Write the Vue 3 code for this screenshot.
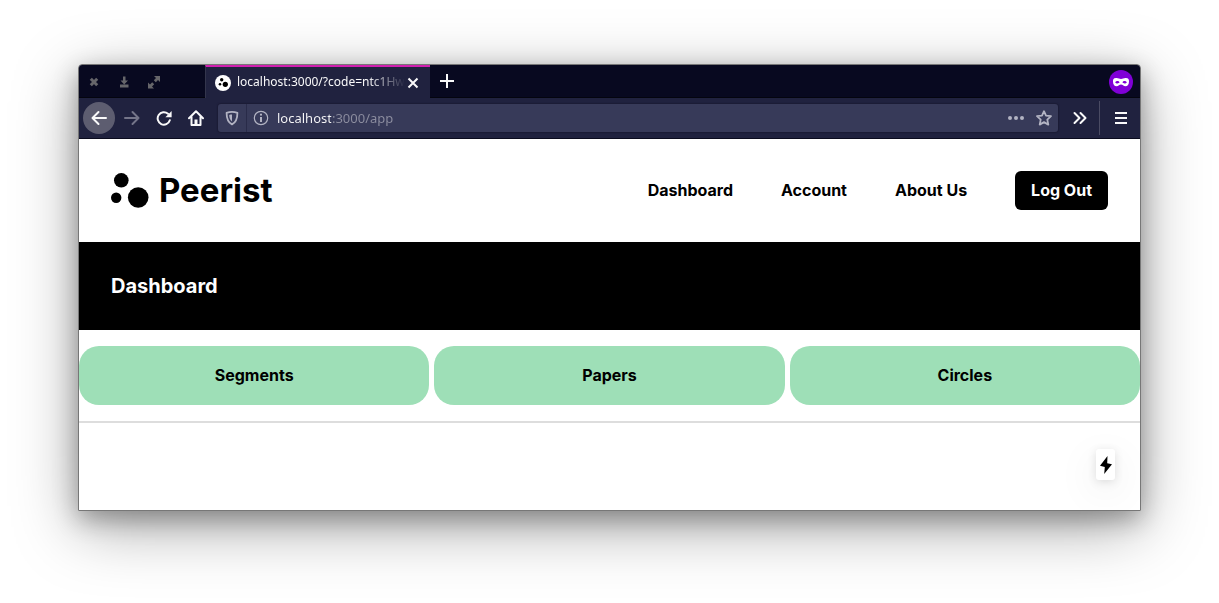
<script setup>
import { ref } from 'vue'

const address = ref('localhost:3000/app')
const links = ['Dashboard', 'Account', 'About Us']
const sections = ['Segments', 'Papers', 'Circles']
</script>

<template>
  <div class="desktop">
    <div class="window">
      <div class="tabbar">
        <div class="controls">
          <button aria-label="Close window">
            <svg width="16" height="16" viewBox="0 0 16 16"><path d="M4.800 4.800l6.400 6.400M11.200 4.800l-6.400 6.400" stroke="currentColor" stroke-width="3" /></svg>
          </button>
          <button aria-label="Minimize window">
            <svg width="16" height="16" viewBox="0 0 16 16"><path d="M7 2.500h2.500V6.500H12L8.200 10.500 4.500 6.500H7zM4 10.500h8.500v3H4z" fill="currentColor" /></svg>
          </button>
          <button aria-label="Maximize window">
            <svg width="16" height="16" viewBox="0 0 16 16"><path d="M8 2h6v6l-2-2-2.200 2.200-2-2L10 4zM2 8.500l2 2 2.200-2.200 2 2L6 12.500l2 2H2z" fill="currentColor" /></svg>
          </button>
        </div>
        <div class="tab">
          <svg width="16" height="16" viewBox="0 0 16 16"><circle cx="8" cy="8" r="8" fill="#fff" /><circle cx="6.700" cy="4.800" r="1.700" /><circle cx="5" cy="9.200" r="1.300" /><circle cx="10.300" cy="9.300" r="2.600" /></svg>
          <span class="tab-title">localhost:3000/?code=ntc1Hw</span>
          <button class="tab-close" aria-label="Close tab">
            <svg width="16" height="16" viewBox="0 0 16 16"><path d="M3.500 3.500l9 9M12.500 3.500l-9 9" stroke="currentColor" stroke-width="2" /></svg>
          </button>
        </div>
        <button class="new-tab" aria-label="New tab">
          <svg width="16" height="16" viewBox="0 0 16 16"><path d="M8 1v14M1 8h14" stroke="currentColor" stroke-width="2" /></svg>
        </button>
        <svg class="private" width="24" height="24" viewBox="0 0 24 24"><circle cx="12" cy="12" r="12" fill="#8000d7" /><path fill="#fff" fill-rule="evenodd" d="M4 11.500C4 8.500 5.300 8 7.500 8c2 0 3 1 4.500 1s2.500-1 4.500-1C18.700 8 20 8.500 20 11.500c0 3-1.400 4.700-3.500 4.700-2.200 0-2.800-1.700-4.500-1.700s-2.300 1.700-4.500 1.700C5.400 16.200 4 14.500 4 11.500zM6.200 12.200c.6 1 1.300 1.300 2.200 1.300s1.700-.5 2.200-1.200c-.6-1-1.200-1.300-2.200-1.300s-1.700.400-2.200 1.200zM17.800 12.200c-.6 1-1.300 1.300-2.200 1.300s-1.700-.5-2.200-1.200c.6-1 1.200-1.300 2.200-1.300s1.700.400 2.200 1.200z" /></svg>
      </div>

      <div class="toolbar">
        <button class="nav back" aria-label="Back">
          <svg width="16" height="16" viewBox="0 0 16 16"><path d="M7.500 2L1.500 8l6 6M1.500 8H15" fill="none" stroke="currentColor" stroke-width="2" stroke-linecap="round" stroke-linejoin="round" /></svg>
        </button>
        <button class="nav forward" aria-label="Forward">
          <svg width="16" height="16" viewBox="0 0 16 16"><path d="M8.500 2l6 6-6 6M14.500 8H1" fill="none" stroke="currentColor" stroke-width="2" stroke-linecap="round" stroke-linejoin="round" /></svg>
        </button>
        <button class="nav" aria-label="Reload">
          <svg width="16" height="16" viewBox="0 0 16 16"><path d="M13.800 10.200A6.200 6.200 0 1 1 12 3.800" fill="none" stroke="currentColor" stroke-width="2" stroke-linecap="round" /><path d="M15.600 1v6.200H9.400z" fill="currentColor" /></svg>
        </button>
        <button class="nav" aria-label="Home">
          <svg width="16" height="16" viewBox="0 0 16 16"><path d="M1 8.300l7-7 7 7M3.500 7v8h9V7" fill="none" stroke="currentColor" stroke-width="2" stroke-linecap="round" stroke-linejoin="round" /><path d="M6.500 9.500h3V15h-3z" fill="currentColor" /></svg>
        </button>
        <div class="address">
          <button class="shield" aria-label="Tracking protection">
            <svg width="16" height="16" viewBox="0 0 16 16"><path d="M8 1.800c2 0 4 .5 5.400 1.100 0 5-.7 9-5.400 11.500C3.300 11.900 2.600 7.900 2.600 2.900 4 2.300 6 1.800 8 1.800z" fill="none" stroke="currentColor" stroke-width="1.800" stroke-linejoin="round" /><path d="M8 4.500v7C6 9.800 5.300 8 5.200 4.900 6 4.700 7 4.500 8 4.500z" fill="currentColor" /></svg>
          </button>
          <button class="info" aria-label="Site information">
            <svg width="16" height="16" viewBox="0 0 16 16"><circle cx="8" cy="8" r="6.700" fill="none" stroke="currentColor" stroke-width="1.200" /><circle cx="8" cy="4.700" r="1.100" fill="currentColor" /><path d="M7 7h2v5H7z" fill="currentColor" /></svg>
          </button>
          <input v-model="address" class="url" type="text" aria-label="Address" spellcheck="false" />
          <button aria-label="Page actions">
            <svg width="16" height="16" viewBox="0 0 16 16" fill="currentColor"><circle cx="2" cy="8" r="2" /><circle cx="8" cy="8" r="2" /><circle cx="14" cy="8" r="2" /></svg>
          </button>
          <button aria-label="Bookmark this page">
            <svg width="16" height="16" viewBox="0 0 16 16"><path d="M8 1.200l2 4.500 5 .5-3.700 3.400 1 5L8 12.100l-4.300 2.500 1-5L1 6.200l5-.5z" fill="none" stroke="currentColor" stroke-width="1.800" stroke-linejoin="round" /></svg>
          </button>
        </div>
        <button class="nav overflow" aria-label="More tools">
          <svg width="16" height="16" viewBox="0 0 16 16"><path d="M2.500 3l5 5-5 5M8.500 3l5 5-5 5" fill="none" stroke="currentColor" stroke-width="2" stroke-linecap="round" stroke-linejoin="round" /></svg>
        </button>
        <button class="menu" aria-label="Open menu">
          <svg width="16" height="16" viewBox="0 0 16 16"><path d="M2 3h12M2 8h12M2 13h12" stroke="currentColor" stroke-width="2" /></svg>
        </button>
      </div>

      <div class="page">
        <header class="header">
          <a class="brand" href="#">
            <svg width="38" height="36" viewBox="0 0 38 36"><circle cx="10.300" cy="7.300" r="7.300" /><circle cx="5.200" cy="24.700" r="5.200" /><circle cx="27.200" cy="24.500" r="10.300" /></svg>
            <span>Peerist</span>
          </a>
          <nav class="links">
            <a v-for="link in links" :key="link" href="#">{{ link }}</a>
            <button class="logout">Log Out</button>
          </nav>
        </header>
        <h1 class="banner">Dashboard</h1>
        <main>
          <div class="sections">
            <button v-for="section in sections" :key="section">{{ section }}</button>
          </div>
          <button class="bolt" aria-label="Build activity">
            <svg width="12" height="18" viewBox="0 0 12 18"><path d="M7.500 0L0 9.700l4.800 1.200L4.200 18 12 8.300 7.200 7.200z" /></svg>
          </button>
        </main>
      </div>
    </div>
  </div>
</template>

<style>
body {
  background: #fff;
}
</style>

<style scoped>
* {
  box-sizing: border-box;
}

button {
  margin: 0;
  padding: 0;
  border: 0;
  background: none;
  color: inherit;
  font: inherit;
  cursor: pointer;
}

svg {
  display: block;
  flex: none;
}

a {
  color: inherit;
  text-decoration: none;
}

.desktop {
  padding: 64px 78px 92px;
  overflow: hidden;
  font-family: Inter, sans-serif;
}

.window {
  border: 1px solid #777;
  border-radius: 4px 4px 0 0;
  overflow: hidden;
  box-shadow: 0 8px 24px rgba(0, 0, 0, 0.3), 0 16px 64px rgba(0, 0, 0, 0.35);
}

.tabbar {
  display: flex;
  height: 33px;
  background: #080920;
  border-bottom: 1px solid #04050f;
  color: #f9f9fa;
  font-family: "Noto Sans", sans-serif;
  font-size: 12px;
}

.controls {
  display: flex;
  align-items: center;
  gap: 14px;
  width: 126px;
  padding: 2px 0 0 7px;
  color: #66666a;
}

.tab {
  display: flex;
  align-items: center;
  width: 225px;
  height: 33px;
  padding: 0 9px;
  background: #20223f;
  border-top: 2px solid #d11fb0;
  border-left: 1px solid #33354c;
}

.tab-title {
  flex: 1;
  min-width: 0;
  margin-left: 6px;
  overflow: hidden;
  white-space: nowrap;
  line-height: 16px;
  padding-bottom: 2px;
  mask-image: linear-gradient(to right, #000 78%, transparent);
}

.new-tab {
  width: 32px;
  padding-left: 9px;
}

.private {
  margin: 5px 7px 0 auto;
}

.toolbar {
  display: flex;
  align-items: center;
  height: 41px;
  padding: 0 3px 0 4px;
  background: #20223f;
  border-bottom: 1px solid #0a0b1e;
  color: #f9f9fa;
}

.nav {
  display: grid;
  place-items: center;
  width: 32px;
  height: 32px;
}

.back {
  margin-right: 1px;
  border-radius: 50%;
  background: #5d5d70;
}

.forward {
  color: #747589;
}

.address {
  display: flex;
  align-items: center;
  flex: 1;
  gap: 12px;
  height: 28px;
  margin-left: 6px;
  padding: 0 6px;
  border-radius: 3px;
  background: #373a59;
  box-shadow: 0 0 1px 1px #1b1c36;
  color: #b2b3c2;
}

.shield {
  height: 28px;
  padding-right: 6px;
  border-right: 1px solid #292b49;
}

.info {
  margin-left: -6px;
}

.url {
  flex: 1;
  min-width: 0;
  height: 28px;
  margin-left: -4px;
  padding: 0;
  border: 0;
  outline: 0;
  background: linear-gradient(to right, #f9f9fa 54px, #8d8ea0 54px) text;
  color: transparent;
  caret-color: #f9f9fa;
  font-family: "Noto Sans", sans-serif;
  font-size: 13px;
}

.overflow {
  margin-left: 6px;
}

.menu {
  height: 34px;
  margin-left: 3px;
  padding: 0 8px 0 13px;
  border-left: 1px solid #4a4b63;
}

.page {
  background: #fff;
  color: #000;
}

.header {
  display: flex;
  align-items: center;
  justify-content: space-between;
  padding: 32px;
}

.brand {
  display: flex;
  align-items: center;
  gap: 10px;
  font-size: 33px;
  line-height: 39px;
  font-weight: 700;
}

.links {
  display: flex;
  align-items: center;
  gap: 48px;
  font-size: 16px;
  line-height: 19px;
  font-weight: 700;
}

.logout {
  padding: 10px 16px;
  border-radius: 6px;
  background: #000;
  color: #fff;
}

.banner {
  margin: 0;
  padding: 32px;
  background: #000;
  color: #fff;
  font-size: 20px;
  line-height: 24px;
  font-weight: 700;
}

.sections {
  display: grid;
  grid-template-columns: repeat(3, 1fr);
  gap: 5px;
  padding: 16px 0;
  border-bottom: 2px solid #ddd;
}

.sections button {
  padding: 20px;
  border-radius: 20px;
  background: #9edfb7;
  font-size: 16px;
  line-height: 19px;
  font-weight: 700;
}

.bolt {
  display: grid;
  place-items: center;
  width: 19px;
  height: 31px;
  margin: 26px 25px 30px auto;
  border-radius: 3px;
  background: #fff;
  box-shadow: 0 11px 40px rgba(0, 0, 0, 0.1), 0 2px 10px rgba(0, 0, 0, 0.12);
}
</style>
